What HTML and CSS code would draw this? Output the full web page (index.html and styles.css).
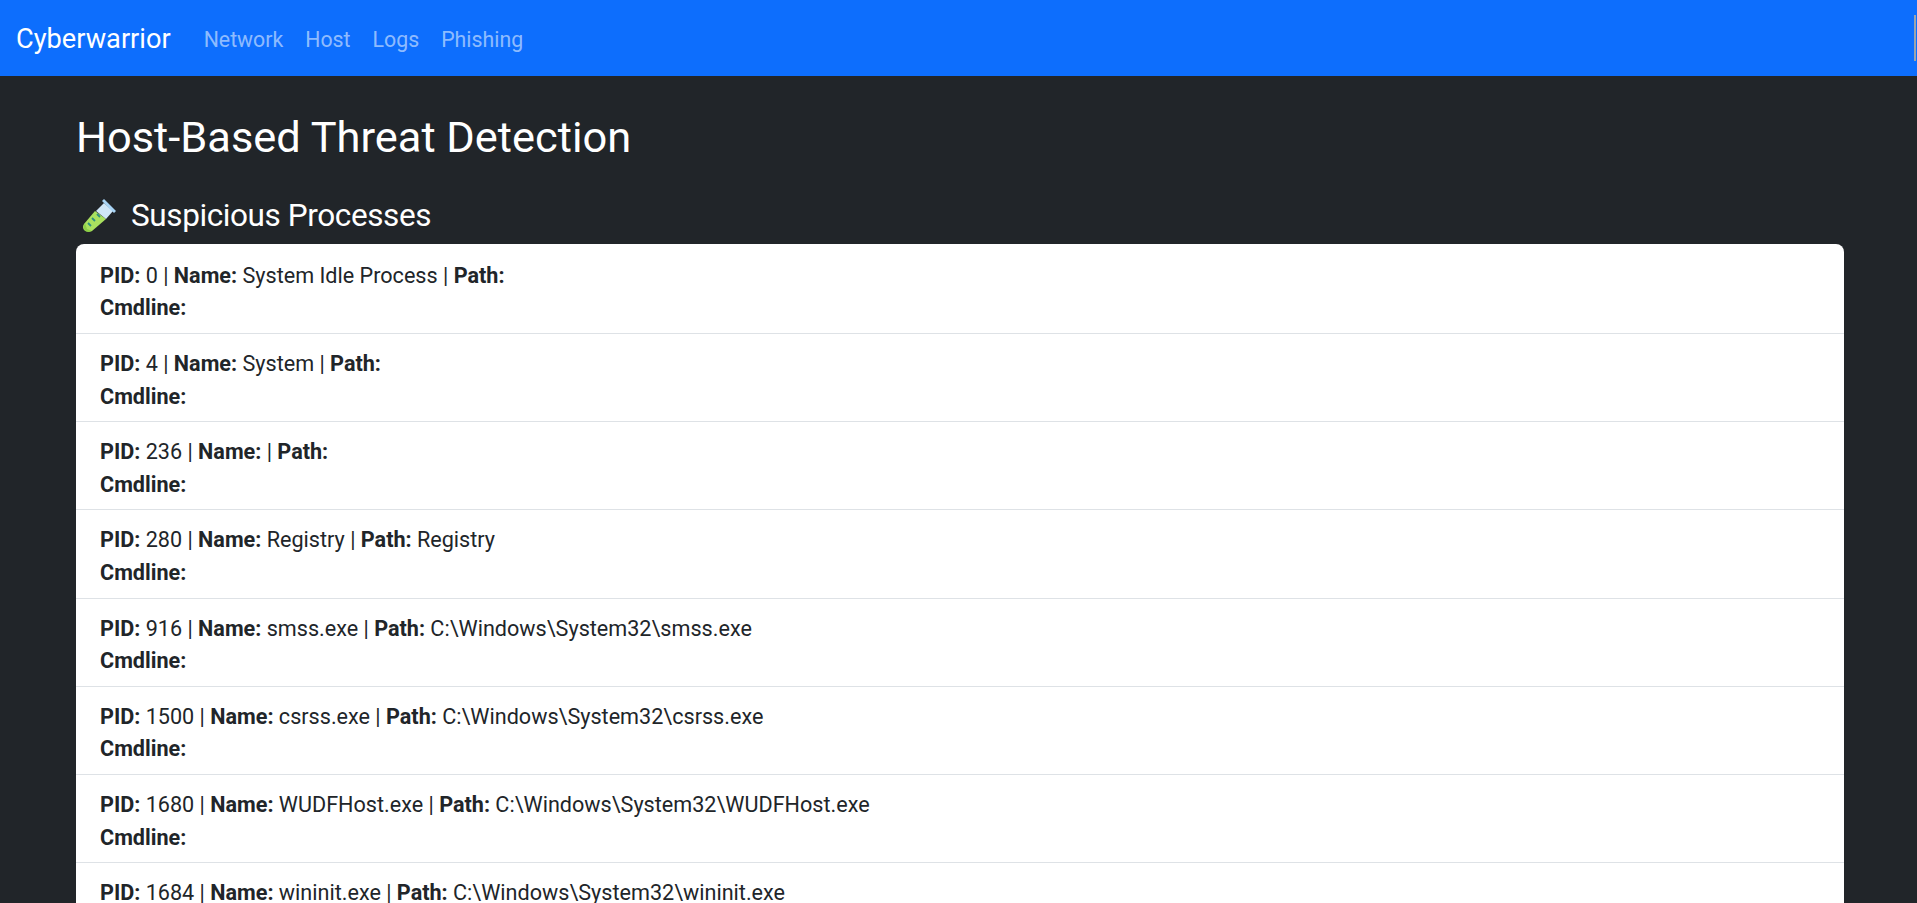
FILE: index.html
```html
<!DOCTYPE html>
<html lang="en">
<head>
  <meta charset="UTF-8">
  <meta name="viewport" content="width=device-width, initial-scale=1.0">
  <title>Host-Based Threat Detection</title>
  <link rel="stylesheet" href="styles.css">
</head>
<body>
  <nav class="navbar">
    <a class="brand" href="#">Cyberwarrior</a>
    <a class="nav-link" href="#">Network</a>
    <a class="nav-link" href="#">Host</a>
    <a class="nav-link" href="#">Logs</a>
    <a class="nav-link" href="#">Phishing</a>
    <span class="nav-edge"></span>
  </nav>

  <main class="container">
    <h1>Host-Based Threat Detection</h1>
    <h2>
      <svg class="tube" viewBox="0 0 36 36" aria-hidden="true">
        <path fill="#a9e05f" d="M14 13 L25 21 L11 33 Q6 35 3 32 Q1 29 3 26 Z"/>
        <path fill="#8ccf45" d="M4 25 L6 31 L11 33 L8 34 Q4 34 3 31 Q2 28 4 25 Z"/>
        <path fill="#cfe6f7" d="M23 5 L32 13 L25 21 L15 13 Z"/>
        <path fill="#a8d4f5" d="M21 3 L23 1 L35 13 L33 15 Z"/>
        <path fill="none" stroke="#2f8f80" stroke-width="1.8" d="M16 16 l3 3 M11 20 l3 3 M7 25 l3 3"/>
      </svg>
      Suspicious Processes
    </h2>

    <ul class="process-list">
      <li><b>PID:</b> 0 | <b>Name:</b> System Idle Process | <b>Path:</b><br><b>Cmdline:</b></li>
      <li><b>PID:</b> 4 | <b>Name:</b> System | <b>Path:</b><br><b>Cmdline:</b></li>
      <li><b>PID:</b> 236 | <b>Name:</b> | <b>Path:</b><br><b>Cmdline:</b></li>
      <li><b>PID:</b> 280 | <b>Name:</b> Registry | <b>Path:</b> Registry<br><b>Cmdline:</b></li>
      <li><b>PID:</b> 916 | <b>Name:</b> smss.exe | <b>Path:</b> C:\Windows\System32\smss.exe<br><b>Cmdline:</b></li>
      <li><b>PID:</b> 1500 | <b>Name:</b> csrss.exe | <b>Path:</b> C:\Windows\System32\csrss.exe<br><b>Cmdline:</b></li>
      <li><b>PID:</b> 1680 | <b>Name:</b> WUDFHost.exe | <b>Path:</b> C:\Windows\System32\WUDFHost.exe<br><b>Cmdline:</b></li>
      <li><b>PID:</b> 1684 | <b>Name:</b> wininit.exe | <b>Path:</b> C:\Windows\System32\wininit.exe</li>
    </ul>
  </main>
</body>
</html>
```

FILE: styles.css
```css
html, body {
  height: 100vh;
  overflow: hidden;
}

body {
  margin: 0;
  background-color: #212529;
  color: #fff;
  font-family: Roboto, "Open Sans", sans-serif;
}

a {
  text-decoration: none;
}

.navbar {
  display: flex;
  align-items: center;
  height: 76px;
  padding-left: 16px;
  background-color: #0d6efd;
}

.brand {
  margin-right: 33px;
  padding-top: 2px;
  color: #fff;
  font-size: 27.2px;
}

.nav-link {
  margin-right: 22px;
  padding-top: 2px;
  color: rgba(255, 255, 255, .55);
  font-size: 21.3px;
}

.nav-edge {
  width: 2px;
  height: 46px;
  margin-left: auto;
  margin-right: 1px;
  background-color: #9aa3ad;
}

.container {
  padding: 0 73px 0 76px;
}

h1 {
  margin: 36px 0 0;
  font-size: 43.4px;
  font-weight: 400;
  line-height: 1.2;
}

h2 {
  display: flex;
  align-items: center;
  gap: 14px;
  margin: 33px 0 9px;
  font-size: 31.5px;
  font-weight: 400;
  letter-spacing: -0.4px;
  line-height: 1.2;
}

.tube {
  width: 36px;
  height: 36px;
  margin-left: 5px;
}

.process-list {
  margin: 0;
  padding: 0;
  list-style: none;
  background-color: #fff;
  border-radius: 8px;
  color: #212529;
  font-size: 21.6px;
  line-height: 32.6px;
}

.process-list li {
  padding: 14px 24px 8px;
  border-bottom: 1px solid #dee2e6;
}

.process-list li:first-child {
  padding-top: 16px;
}
```
